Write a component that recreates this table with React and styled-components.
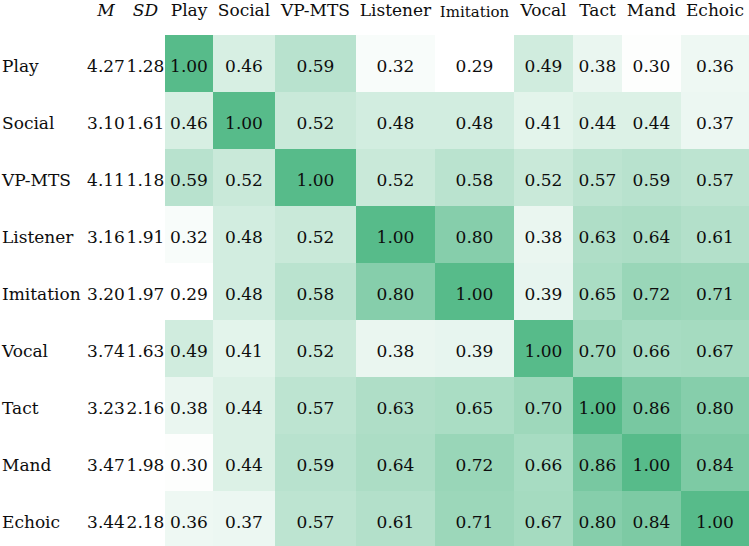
import styled, { createGlobalStyle } from 'styled-components';

const labels = ['Play', 'Social', 'VP-MTS', 'Listener', 'Imitation', 'Vocal', 'Tact', 'Mand', 'Echoic'];

const stats = [
  ['4.27', '1.28'],
  ['3.10', '1.61'],
  ['4.11', '1.18'],
  ['3.16', '1.91'],
  ['3.20', '1.97'],
  ['3.74', '1.63'],
  ['3.23', '2.16'],
  ['3.47', '1.98'],
  ['3.44', '2.18'],
];

const matrix = [
  [1.0, 0.46, 0.59, 0.32, 0.29, 0.49, 0.38, 0.3, 0.36],
  [0.46, 1.0, 0.52, 0.48, 0.48, 0.41, 0.44, 0.44, 0.37],
  [0.59, 0.52, 1.0, 0.52, 0.58, 0.52, 0.57, 0.59, 0.57],
  [0.32, 0.48, 0.52, 1.0, 0.8, 0.38, 0.63, 0.64, 0.61],
  [0.29, 0.48, 0.58, 0.8, 1.0, 0.39, 0.65, 0.72, 0.71],
  [0.49, 0.41, 0.52, 0.38, 0.39, 1.0, 0.7, 0.66, 0.67],
  [0.38, 0.44, 0.57, 0.63, 0.65, 0.7, 1.0, 0.86, 0.8],
  [0.3, 0.44, 0.59, 0.64, 0.72, 0.66, 0.86, 1.0, 0.84],
  [0.36, 0.37, 0.57, 0.61, 0.71, 0.67, 0.8, 0.84, 1.0],
];

// white -> #57bb8a over the observed range
const MIN = 0.29;
const MAX = 1.0;
const scale = (v) => {
  const t = Math.max(0, Math.min(1, (v - MIN) / (MAX - MIN)));
  const mix = (a, b) => Math.round(a + (b - a) * t);
  return `rgb(${mix(255, 87)}, ${mix(255, 187)}, ${mix(255, 138)})`;
};

function App() {
  return (
    <>
      <GlobalStyle />
      <Table>
        <HeadCell />
        <HeadCell $italic>M</HeadCell>
        <HeadCell $italic>SD</HeadCell>
        {labels.map((l) => (
          <HeadCell key={l} $small={l === 'Imitation'}>
            {l}
          </HeadCell>
        ))}

        {labels.map((row, i) => [
          <LabelCell key={`${row}-l`}>{row}</LabelCell>,
          <StatCell key={`${row}-m`}>{stats[i][0]}</StatCell>,
          <StatCell key={`${row}-sd`}>{stats[i][1]}</StatCell>,
          ...matrix[i].map((v, j) => (
            <ValueCell key={`${row}-${j}`} $bg={scale(v)}>
              {v.toFixed(2)}
            </ValueCell>
          )),
        ])}
      </Table>
    </>
  );
}

// -------------------------------------------------- styling ----------------------------------------------
const GlobalStyle = createGlobalStyle`
  html, body {
    margin: 0;
    padding: 0;
    background: #fff;
    overflow: hidden;
  }
  body {
    font-family: "DejaVu Serif", "Liberation Serif", serif;
    color: #0d0d0d;
  }
`;

const Table = styled.div`
  display: grid;
  grid-template-columns: 86px 40px 39px 48px 62px 81px 79px 79px 59px 49px 59px 68px;
  grid-template-rows: 35px repeat(9, 57px);
  width: 749px;
  height: 546px;
  overflow: hidden;
  font-size: 17px;
`;

const HeadCell = styled.div`
  display: flex;
  justify-content: center;
  align-items: flex-start;
  white-space: nowrap;
  font-style: ${({ $italic }) => ($italic ? 'italic' : 'normal')};
  font-size: ${({ $small }) => ($small ? '15px' : '17px')};
  padding-top: ${({ $small }) => ($small ? '2px' : '0')};
  line-height: 20px;
`;

const LabelCell = styled.div`
  display: flex;
  align-items: center;
  padding: 4px 0 0 2px;
  white-space: nowrap;
`;

const StatCell = styled.div`
  display: flex;
  align-items: center;
  justify-content: center;
  padding-top: 4px;
  white-space: nowrap;
`;

const ValueCell = styled.div`
  display: flex;
  align-items: center;
  justify-content: center;
  padding-top: 4px;
  white-space: nowrap;
  background-color: ${({ $bg }) => $bg};
`;

export default App;
